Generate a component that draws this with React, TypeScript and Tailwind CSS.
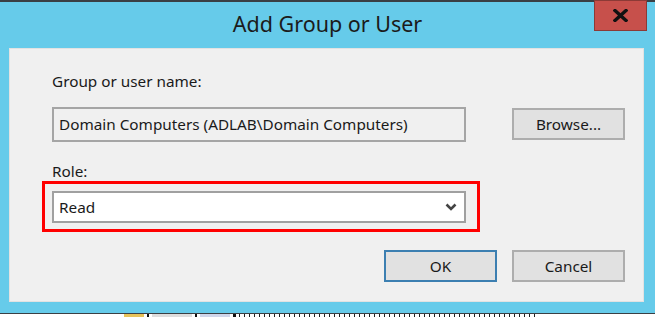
import React from 'react';

const font = { fontFamily: '"Noto Sans", "Open Sans", sans-serif' };

const Chevron: React.FC = () => (
    <svg width="12" height="8" viewBox="0 0 12 8" className="text-[#444]">
        <polyline points="1.5,1.5 6,6 10.5,1.5" fill="none" stroke="currentColor" strokeWidth="2.6" />
    </svg>
);

const CloseGlyph: React.FC = () => (
    <svg width="15" height="13" viewBox="0 0 15 13">
        <path d="M2 1.5 L13 11.5 M13 1.5 L2 11.5" stroke="#111" strokeWidth="3.4" strokeLinecap="square" />
    </svg>
);

const App: React.FC = () => {
    return (
        <div className="w-[655px] h-[317px] bg-[#66cbea] flex flex-col overflow-hidden text-[#1a1a1a]" style={font}>
            {/* top edge */}
            <div className="h-[2px] bg-[#3a3f44] shrink-0" />

            {/* title bar */}
            <div className="h-[46px] flex shrink-0">
                <div className="w-[61px]" />
                <div className="flex-1 flex items-start justify-center pt-[8px] text-[21.5px] leading-[27px] text-[#1b1b1b]">
                    Add Group or User
                </div>
                <div className="w-[61px] flex">
                    <div className="w-[53px] h-[31px] -mt-[2px] bg-[#c7504b] border border-[#8c3a36] flex items-center justify-center">
                        <CloseGlyph />
                    </div>
                </div>
            </div>

            {/* dialog body */}
            <div className="ml-[9px] mr-[11px] h-[254px] shrink-0 bg-[#f0f0f0] border border-[#e2e2e2] pl-[42px] pr-[18px] flex flex-col text-[15.3px]">
                <div className="mt-[22px] h-[20px] leading-[20px]">Group or user name:</div>

                <div className="mt-[16px] flex items-start">
                    <div className="w-[414px] h-[35px] border-2 border-[#a5a5a5] bg-[#f0f0f0] flex items-center pl-[5px]">
                        Domain Computers (ADLAB\Domain Computers)
                    </div>
                    <div className="ml-auto mt-[1px] w-[113px] h-[32px] border-2 border-[#adadad] bg-[#e1e1e1] flex items-center justify-center">
                        Browse...
                    </div>
                </div>

                <div className="mt-[19px] h-[20px] leading-[20px]">Role:</div>

                <div className="-ml-[10px] w-[438px] h-[51px] border-[3px] border-[#ff0000] pl-[7px] pr-[11px] pt-[7px]">
                    <div className="h-[32px] border-2 border-[#a0a0a0] bg-white flex items-center pl-[5px] pr-[7px]">
                        <span className="flex-1">Read</span>
                        <Chevron />
                    </div>
                </div>

                <div className="mt-[18px] flex justify-end gap-[15px]">
                    <div className="w-[113px] h-[32px] border-2 border-[#3c7fb1] bg-[#e1e1e1] flex items-center justify-center">
                        OK
                    </div>
                    <div className="w-[113px] h-[32px] border-2 border-[#adadad] bg-[#e1e1e1] flex items-center justify-center">
                        Cancel
                    </div>
                </div>
            </div>

            <div className="h-[11px] shrink-0" />

            {/* taskbar glimpse */}
            <div className="h-[1px] bg-[#3a3f44] shrink-0" />
            <div className="flex-1 bg-white flex items-start gap-[3px] pl-[124px]">
                <div className="w-[20px] h-full bg-[#e8c35a]" />
                <div className="w-[2px] h-full bg-[#111]" />
                <div className="w-[40px] h-full bg-[#ddd]" />
                <div className="w-[2px] h-full bg-[#111]" />
                <div className="w-[30px] h-full bg-[#cfd6ea]" />
                <div className="w-[3px] h-full bg-[#111]" />
                <div className="w-[300px] h-full bg-[repeating-linear-gradient(90deg,#222_0px,#222_1px,#fff_1px,#fff_5px)]" />
            </div>
        </div>
    );
};

export default App;
